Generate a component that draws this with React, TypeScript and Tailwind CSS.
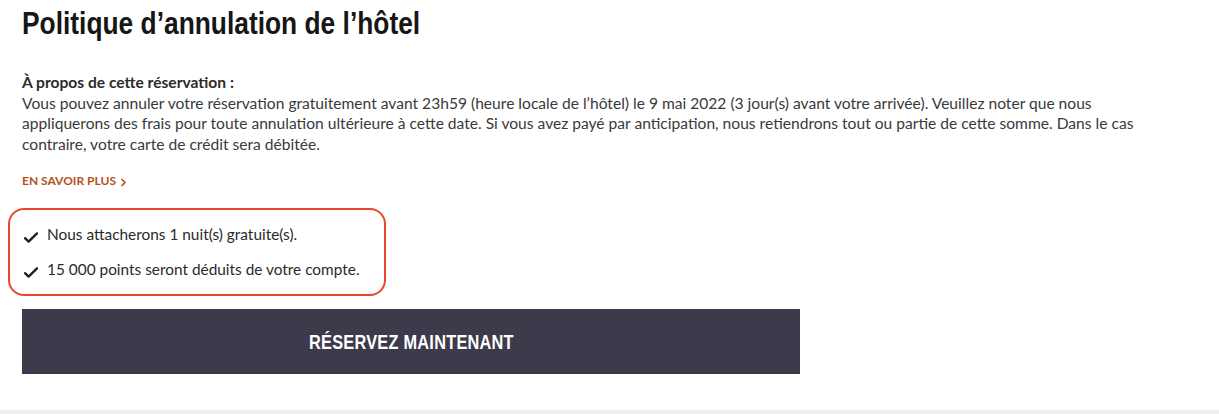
import React from "react";

const Check = () => (
  <svg width="14" height="11" viewBox="0 0 14 11" className="shrink-0">
    <path d="M1 6.2 L4.6 9.6 L13 1.4" fill="none" stroke="#1f1f1f" strokeWidth="2.4" strokeLinecap="round" strokeLinejoin="round" />
  </svg>
);

export default function App() {
  const body = { fontFamily: "Lato, 'Open Sans', sans-serif" };
  return (
    <div className="w-[1219px] h-[414px] bg-white flex flex-col overflow-hidden" style={body}>
      <div className="flex-1 px-[22px] flex flex-col">
        <h1
          className="mt-[6px] h-[36px] text-[31px] leading-[36px] font-bold text-[#161616] whitespace-nowrap origin-left scale-x-[0.85]"
          style={{ fontFamily: "'Liberation Sans', Arial, sans-serif" }}
        >
          Politique d’annulation de l’hôtel
        </h1>
        <div className="mt-[30px] text-[15.6px] leading-[20.5px] text-[#3a3a3a]">
          <div className="font-bold text-[#2b2b2b]">À propos de cette réservation :</div>
          <div>
            Vous pouvez annuler votre réservation gratuitement avant 23h59 (heure locale de l’hôtel) le 9 mai 2022 (3 jour(s) avant votre arrivée). Veuillez noter que nous
            <br />
            appliquerons des frais pour toute annulation ultérieure à cette date. Si vous avez payé par anticipation, nous retiendrons tout ou partie de cette somme. Dans le cas
            <br />
            contraire, votre carte de crédit sera débitée.
          </div>
        </div>
        <a className="mt-[20px] flex items-center gap-[4px] text-[12px] leading-[14px] font-bold text-[#b4501f] uppercase">
          En savoir plus
          <svg width="7" height="9" viewBox="0 0 7 9" className="mt-[3px]">
            <path d="M1.5 1 L5 4.5 L1.5 8" fill="none" stroke="#b4501f" strokeWidth="1.6" />
          </svg>
        </a>
        <div className="mt-[20px] ml-[-14px] w-[378px] h-[88px] border-2 border-[#e8472b] rounded-[16px] flex flex-col justify-center gap-[16px] pl-[14px] text-[15.4px] leading-[19px] text-[#2b2b2b]">
          <div className="flex items-center gap-[9px]">
            <span className="mt-[6px]"><Check /></span>
            <span>Nous attacherons 1 nuit(s) gratuite(s).</span>
          </div>
          <div className="flex items-center gap-[9px]">
            <span className="mt-[6px]"><Check /></span>
            <span>15 000 points seront déduits de votre compte.</span>
          </div>
        </div>
        <button className="mt-[13px] w-[778px] h-[65px] bg-[#3d3a4b] flex items-center justify-center">
          <span
            className="text-white font-bold text-[20px] tracking-[0.3px] whitespace-nowrap inline-block scale-x-[0.816]"
            style={{ fontFamily: "'Liberation Sans', Arial, sans-serif" }}
          >
            RÉSERVEZ MAINTENANT
          </span>
        </button>
      </div>
      <div className="h-[4px] bg-[#f0f0f0]" />
    </div>
  );
}
